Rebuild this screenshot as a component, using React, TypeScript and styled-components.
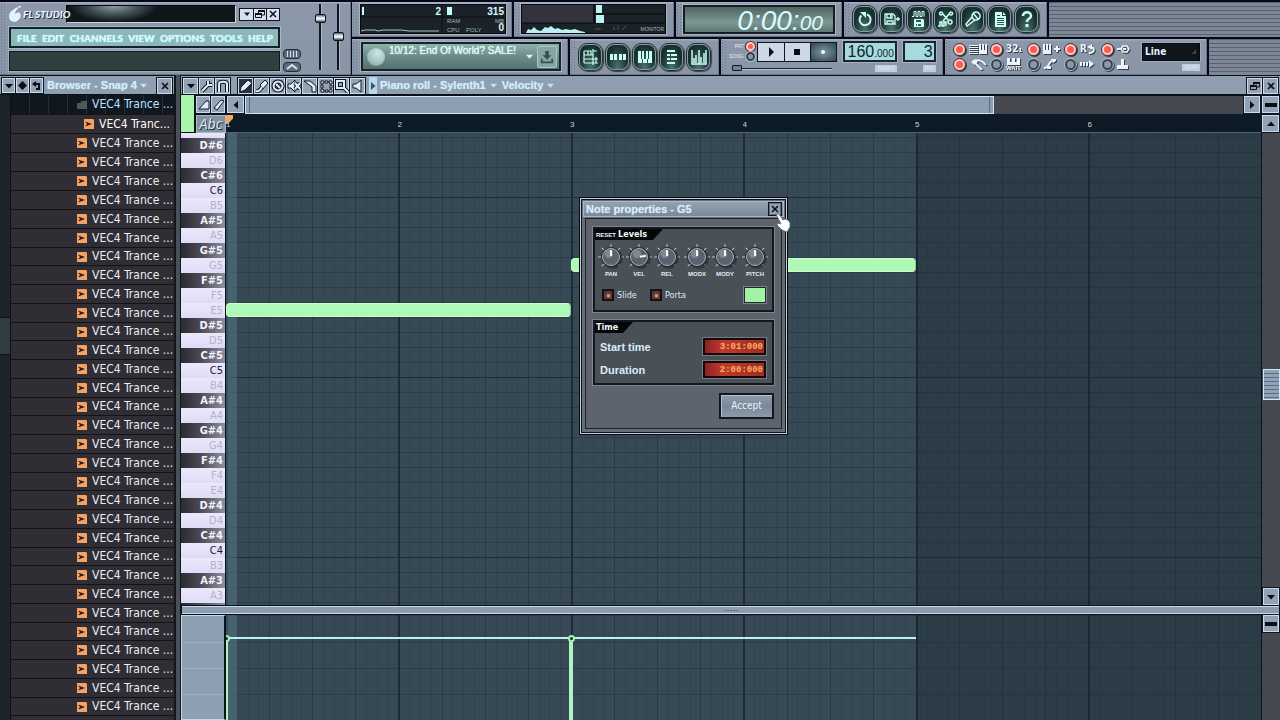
import React from 'react';
import styled, { createGlobalStyle, css } from 'styled-components';

const UI = '"Liberation Sans", Arial, sans-serif';
const TAHOMA = '"DejaVu Sans Condensed", "DejaVu Sans", Tahoma, sans-serif';
const CAPS = 'Lato, "Liberation Sans", sans-serif';
const MONO = '"Liberation Mono", monospace';

const Global = createGlobalStyle`
  *, *::before, *::after { box-sizing: border-box; }
  html, body { margin: 0; background: #10161c; overflow: hidden; }
  body { font-family: ${UI}; font-size: 11px; color: #dff2ff; }
  button, input, select { font: inherit; color: inherit; margin: 0; padding: 0; border: 0; border-radius: 0; background: none; }
  ul, ol { list-style: none; margin: 0; padding: 0; }
  h2 { margin: 0; font-size: 11px; }
  svg { display: block; flex: none; }
`;

/* ---------- shell ---------- */
const Shell = styled.div`
  display: flex;
  flex-direction: column;
  height: 100vh;
  overflow: hidden;
`;
const Header = styled.header`
  display: flex;
  height: 75px;
  flex: none;
  padding-top: 2px;
  background: #04081a;
  gap: 1px;
`;
const Panel = styled.section<{ $w?: number; $pad?: string; $gap?: number }>`
  display: flex;
  align-items: center;
  flex: none;
  width: ${(p) => (p.$w ? `${p.$w}px` : 'auto')};
  padding: ${(p) => p.$pad ?? '0'};
  gap: ${(p) => p.$gap ?? 0}px;
  background:
    radial-gradient(#6c7888 1px, transparent 1px) 0 0 / 3px 3px repeat-y,
    radial-gradient(#6c7888 1px, transparent 1px) 3px 1px / 3px 3px repeat-y,
    linear-gradient(#a1adbb 0 1px, #8c98a9 2px, #8896a8);
  border-right: 1px solid #6a7584;
  border-bottom: 1px solid #6a7584;
`;
const Stripes = styled.div`
  flex: 1;
  background: repeating-linear-gradient(#59626f 0 1px, #7d8795 1px 4px);
`;
const ToolRows = styled.div`
  display: grid;
  grid-template-rows: 35px 36px;
  gap: 2px;
  flex: 1;
  min-width: 0;
`;
const ToolRow = styled.div`
  display: flex;
  gap: 2px;
`;

/* ---------- main title panel ---------- */
const TitlePanel = styled(Panel)`
  width: 351px;
  padding: 2px 0 0 9px;
  align-items: flex-start;
`;
const TitleStack = styled.div`
  width: 271px;
`;
const TitleLine = styled.div`
  display: flex;
  align-items: center;
  height: 20px;
`;
const Brand = styled.h1`
  margin: 0;
  width: 43px;
  white-space: nowrap;
  font: italic 900 10px/18px ${CAPS};
  color: #e6f6fb;
  text-shadow: 1px 1px 0 #1d2730;
  z-index: 1;
`;
const Glass = styled.div`
  flex: 1;
  height: 18px;
  border: 1px solid #05070a;
  border-bottom-color: #c7d3dd;
  border-right-color: #c7d3dd;
  background: radial-gradient(ellipse 44px 16px at 28% 0, #8ba09f, #39484b 60%, transparent), #10171b;
`;
const WinButtons = styled.div`
  display: flex;
  margin-left: 3px;
  border: 1px solid #10151c;
`;
const SquareBtn = styled.button<{ $w?: number; $h?: number; $dark?: boolean }>`
  display: grid;
  place-items: center;
  flex: none;
  width: ${(p) => p.$w ?? 15}px;
  height: ${(p) => p.$h ?? 16}px;
  color: #0a0f16;
  background: ${(p) => (p.$dark ? '#2a333d' : '#93a3b5')};
  border: 1px solid #c9dcec;
  box-shadow: 0 0 0 1px #10161d;
  margin-right: 1px;
`;
const DialogClose = styled(SquareBtn)`
  border-color: #5f6d7c;
`;
const WinBtn = styled.button`
  display: grid;
  place-items: center;
  width: 13px;
  height: 11px;
  color: #10151c;
  background: #d7e0ee;
  & + & { border-left: 1px solid #10151c; }
`;
const MenuBar = styled.nav`
  display: flex;
  align-items: center;
  justify-content: space-between;
  height: 21px;
  margin-top: 3px;
  padding: 0 5px 0 6px;
  background: #8bb8b9;
  border: 2px solid #152028;
  outline: 1px solid #a9b8c6;
`;
const MenuItem = styled.button`
  font: 900 10px/16px ${CAPS};
  color: #d3fbff;
  text-shadow: 0 0 1px #d3fbff;
`;
const Hint = styled.div`
  height: 20px;
  margin-top: 3px;
  background: #2f4041;
  border: 1px solid #101920;
  outline: 1px solid #a1b0be;
`;
const MiniCol = styled.div`
  display: flex;
  flex-direction: column;
  gap: 3px;
  margin: 45px 12px 0 3px;
`;
const MiniBtn = styled.button`
  display: grid;
  place-items: center;
  width: 18px;
  height: 10px;
  border: 1px solid #232c37;
  border-radius: 4px;
  background: #5d6a79;
  color: #d5e4ee;
`;
const Fader = styled.input`
  appearance: none;
  writing-mode: vertical-lr;
  direction: rtl;
  width: 14px;
  height: 66px;
  margin-right: 4px;
  background: linear-gradient(90deg, transparent 6px, #10161e 6px 8px, #aab8c5 8px 9px, transparent 9px);
  &::-webkit-slider-thumb {
    appearance: none;
    width: 11px;
    height: 9px;
    background: linear-gradient(#55606d, #e8f2f6 40% 60%, #39434f);
    border: 1px solid #10161e;
    border-radius: 2px;
  }
`;

/* ---------- displays ---------- */
const Screen = styled.div<{ $w: number }>`
  width: ${(p) => p.$w}px;
  height: 30px;
  overflow: hidden;
  background: #1b2228;
  border: 1px solid #05080c;
  outline: 1px solid #a6b2bf;
`;
const Clock = styled.div`
  display: flex;
  align-items: baseline;
  justify-content: flex-end;
  width: 152px;
  height: 29px;
  padding-right: 10px;
  border: 2px solid #141d22;
  outline: 1px solid #a6b2bf;
  background: linear-gradient(#4e6361, #7d9894 60%, #5d7672);
  color: #d8fbff;
  font: italic 28px/27px ${UI};
`;
const ClockSmall = styled.span`
  font-size: 21px;
`;
const RoundBtn = styled.button`
  display: grid;
  place-items: center;
  width: 25px;
  height: 28px;
  border: 2px solid #86a09f;
  border-radius: 9px;
  outline: 1px solid #232f38;
  outline-offset: -1px;
  background: radial-gradient(ellipse at 50% 100%, #4e7470, #17302f 70%);
  box-shadow: 1px 1px 1px #39434f;
  color: #c9fff6;
  margin-right: 2px;
`;
const News = styled.div`
  display: flex;
  align-items: center;
  gap: 4px;
  width: 200px;
  height: 29px;
  padding: 0 2px 0 4px;
  border: 2px solid #17232a;
  outline: 1px solid #a6b2bf;
  background: linear-gradient(#8fb0ac, #6c8b88 50%, #56716f);
`;
const NewsText = styled.a`
  flex: 1;
  align-self: flex-start;
  white-space: nowrap;
  text-decoration: none;
  color: #e2ffff;
  font: 10px/14px ${UI};
  text-shadow: 0 0 1px #e2ffff;
`;
const Orb = styled.span`
  flex: none;
  width: 18px;
  height: 18px;
  border-radius: 50%;
  background: radial-gradient(circle at 60% 30%, #cde6e4, #a3c2bf 60%, #6b8a88);
`;
const DownloadBtn = styled.button`
  display: grid;
  place-items: center;
  flex: none;
  width: 20px;
  height: 22px;
  border: 1px solid #a9cbc8;
  border-radius: 2px;
  background: #86a5a2;
  color: #34504f;
`;

/* ---------- transport ---------- */
const Led = styled.input`
  appearance: none;
  flex: none;
  width: 11px;
  height: 11px;
  border: 2px solid #3a4450;
  border-radius: 50%;
  background: #8a98a8;
  box-shadow: 0 0 0 1px #b3bfca;
  &:checked {
    background: #ff5a4c;
    border-color: #f6cdc8;
    box-shadow: 0 0 0 1px #56323a;
  }
`;
const SmallLed = styled(Led)`
  width: 9px;
  height: 9px;
`;
const Column = styled.div<{ $gap?: number; $align?: string }>`
  display: flex;
  flex-direction: column;
  gap: ${(p) => p.$gap ?? 0}px;
  align-items: ${(p) => p.$align ?? 'stretch'};
`;
const Row = styled.div<{ $gap?: number }>`
  display: flex;
  align-items: center;
  gap: ${(p) => p.$gap ?? 0}px;
`;
const ModeLabel = styled.label`
  display: flex;
  align-items: center;
  justify-content: flex-end;
  gap: 2px;
  height: 9px;
  font: 5px/7px ${UI};
  color: #e3eef7;
`;
const PlayGroup = styled.div`
  display: flex;
  border: 1px solid #10161e;
`;
const PlayBtn = styled.button<{ $rec?: boolean }>`
  display: grid;
  place-items: center;
  width: 26px;
  height: 18px;
  background: ${(p) => (p.$rec ? 'radial-gradient(#7e979f, #2e444c)' : '#cdd7e6')};
  color: ${(p) => (p.$rec ? '#dffcff' : '#0b1016')};
  & + & { border-left: 1px solid #10161e; }
`;
const SongPos = styled.input`
  appearance: none;
  width: 100px;
  height: 7px;
  margin: 3px 0 0 3px;
  background: linear-gradient(transparent 3px, #1d252e 3px 4px, #b6c2ce 4px 5px, transparent 5px);
  &::-webkit-slider-thumb {
    appearance: none;
    width: 10px;
    height: 6px;
    border: 1px solid #10161e;
    border-radius: 1px;
    background: #76828f;
  }
`;
const Lcd = styled.div<{ $w: number }>`
  display: flex;
  justify-content: flex-end;
  align-items: baseline;
  width: ${(p) => p.$w}px;
  height: 21px;
  padding-right: 1px;
  border: 2px solid #1a242c;
  outline: 1px solid #a6b2bf;
  background: #a5dbdf;
  color: #10242a;
  font: 16px/18px ${UI};
`;
const LcdSmall = styled.span`
  font-size: 10px;
`;
const Plate = styled.span`
  height: 7px;
  padding: 0 2px;
  margin-top: 3px;
  background: #bfcbe2;
  color: #dfe8f5;
  font: 5px/7px ${UI};
`;
const Toggles = styled.div`
  display: grid;
  grid-template-columns: repeat(5, 37px);
  grid-auto-rows: 15px;
  align-items: center;
`;
const Toggle = styled.label`
  display: flex;
  align-items: center;
  gap: 4px;
  color: #edf3f8;
  filter: drop-shadow(1px 1px 0 #333d49);
`;
const SnapSelect = styled.select`
  appearance: none;
  width: 58px;
  height: 18px;
  padding-left: 2px;
  border: 1px solid #06090d;
  outline: 1px solid #9eabb9;
  background: linear-gradient(135deg, transparent 50%, #3d4650 50%) 49px 6px / 4px 4px no-repeat, #10151b;
  font: bold 10px/16px ${TAHOMA};
`;

/* ---------- browser ---------- */
const Body = styled.main`
  display: flex;
  flex: 1;
  min-height: 0;
  background: #10161c;
`;
const BrowserPane = styled.aside`
  display: flex;
  flex-direction: column;
  flex: none;
  width: 175px;
  border-right: 1px solid #10141a;
`;
const Bar = styled.div`
  display: flex;
  align-items: center;
  flex: none;
  height: 20px;
  padding: 1px 1px 0 2px;
  background: #8d9fb1;
  border-bottom: 1px solid #0b1118;
  border-top: 1px solid #0b1118;
`;
const BarTitle = styled.h2<{ $m: string }>`
  margin: ${(p) => p.$m};
  white-space: pre;
  font: bold 11px/14px ${UI};
  color: #d7ebfb;
  text-shadow: 0 0 1px #b9d8f0;
`;
const Caret = styled.span`
  color: #c9dff0;
`;
const Spacer = styled.div<{ $n?: number }>`
  flex: ${(p) => p.$n ?? 1};
`;
const BrowserBody = styled.div`
  display: flex;
  flex: 1;
  min-height: 0;
`;
const BrowserScroll = styled.div`
  width: 11px;
  background: #1c242a;
  border-right: 1px solid #0c1014;
  &::after {
    content: '';
    display: block;
    height: 38px;
    margin-top: 222px;
    background: #303d42;
    border-block: 1px solid #0c1014;
  }
`;
const FileList = styled.ul`
  flex: 1;
  overflow: hidden;
  background: #302d34;
`;
const FileRow = styled.li<{ $kind?: 'folder' | 'sub' }>`
  display: flex;
  align-items: center;
  gap: 5px;
  height: 19px;
  padding-left: 66px;
  white-space: nowrap;
  border-bottom: 1px solid #131217;
  font: 12px/17px ${TAHOMA};
  color: #e9edf6;
  &:nth-child(4n + 1) { height: 18px; }
  &:nth-child(5) { height: 19px; }
  ${(p) =>
    p.$kind === 'folder' &&
    css`
      background: repeating-linear-gradient(90deg, transparent 0 18px, #262e36 18px 19px) , #10181f;
      color: #bfe0ff;
      &:nth-child(4n + 1) { height: 20px; }
      svg { color: #4d5a5c; }
    `}
  ${(p) =>
    p.$kind === 'sub' &&
    css`
      padding-left: 73px;
      color: #ffffff;
    `}
`;
const Divider = styled.div`
  flex: none;
  width: 6px;
  background: #4a5058;
  border-inline: 1px solid #12171d;
`;

/* ---------- piano roll ---------- */
const Roll = styled.section`
  display: flex;
  flex-direction: column;
  flex: 1;
  min-width: 0;
`;
const ToolGroup = styled.div`
  display: flex;
  margin-left: 7px;
`;
const PlayChip = styled.span`
  display: grid;
  place-items: center;
  width: 8px;
  height: 17px;
  margin-left: 3px;
  background: #b9d8ef;
  color: #3d5266;
`;
const TopArea = styled.div`
  display: grid;
  grid-template-columns: 14px 31px 1fr 19px;
  grid-template-rows: 19px 19px;
  flex: none;
  background: #0b1118;
`;
const ColorStrip = styled.div`
  grid-row: 1 / 3;
  background: #a9f5ae;
  border-right: 1px solid #0b1118;
  border-bottom: 1px solid #0b1118;
`;
const Cell = styled.div`
  display: flex;
  align-items: center;
  padding-left: 1px;
  min-width: 0;
`;
const AbcBtn = styled.button`
  width: 30px;
  height: 18px;
  background: #82909f;
  color: #d9ebf8;
  font: italic 14px/16px ${TAHOMA};
  text-shadow: 1px 1px 0 #1d2731;
  border: 1px solid #a9bac9;
`;
const HTrack = styled.div`
  flex: 1;
  height: 18px;
  background: #464950;
`;
const HThumb = styled.div`
  width: 75%;
  height: 18px;
  border: 1px solid #cfe2f2;
  background: linear-gradient(90deg, transparent 3px, #5d6d7f 3px 4px, transparent 4px calc(100% - 4px), #5d6d7f calc(100% - 4px) calc(100% - 3px), transparent calc(100% - 3px)), #8d9fb3;
`;
const Ruler = styled.ol`
  display: grid;
  grid-template-columns: repeat(6, 1fr);
  background: #0c1b25;
  border-bottom: 1px solid #4e6371;
  font: 8px/21px ${UI};
  color: #c6d9e4;
`;
const Tick = styled.li<{ $first?: boolean }>`
  margin-left: -1px;
  overflow: hidden;
  ${(p) => p.$first && css`
    display: flex;
    margin-left: 0;
    &::before { content: ''; width: 7px; height: 9px; margin: 1px -7px 0 0; background: #f5a864; clip-path: polygon(0 0, 100% 0, 100% 40%, 25% 100%, 0 100%); }
  `}
`;
const KeyArea = styled.div`
  display: grid;
  grid-template-columns: 45px 1fr 19px;
  flex: 1;
  min-height: 0;
`;
const Keys = styled.ol`
  overflow: hidden;
  border-right: 1px solid #0c1218;
`;
const Key = styled.li<{ $black: boolean; $root: boolean; $cut: boolean }>`
  height: ${(p) => (p.$cut ? 5 : 15)}px;
  overflow: hidden;
  padding-right: 2px;
  text-align: right;
  font: ${(p) => (p.$black ? 'bold 11px/15px' : '11px/15px')} ${TAHOMA};
  color: ${(p) => (p.$black ? '#f4f4ff' : p.$root ? '#20242c' : '#b4b3c4')};
  background: ${(p) =>
    p.$black ? 'linear-gradient(90deg, #2b2a32, #4c4b55 45%, #8f8fa0)' : 'linear-gradient(#ebe8fd, #dedcf6)'};
`;
const verticals = css`
  repeating-linear-gradient(90deg, #1b2b38 0 2px, transparent 2px calc(100% / 6)),
  repeating-linear-gradient(90deg, #293a47 0 1px, transparent 1px calc(100% / 24)),
  repeating-linear-gradient(90deg, #31434f 0 1px, transparent 1px calc(100% / 96))
`;
const shade = css`
  linear-gradient(90deg, rgba(96, 135, 150, 0.4) 11px, transparent 11px calc(100% * 2 / 3), rgba(22, 36, 44, 0.34) calc(100% * 2 / 3))
`;
const Grid = styled.div`
  position: relative;
  overflow: hidden;
  background:
    ${shade},
    repeating-linear-gradient(transparent 0 64px, #1d2e3a 64px 65px, transparent 65px 180px),
    ${verticals},
    repeating-linear-gradient(transparent 0 4px, #2c3d4a 4px 5px, transparent 5px 15px),
    #374955;
`;
const Note = styled.div<{ $bar: number; $row: number }>`
  position: absolute;
  left: calc(100% * ${(p) => p.$bar} / 6);
  top: ${(p) => p.$row * 15 - 10}px;
  width: calc(100% / 3);
  height: 14px;
  border-radius: 4px;
  background: #aef9b5;
  border: 1px solid #c9ffcb;
  border-right-color: #86cf93;
`;
const VTrack = styled.div`
  display: flex;
  flex-direction: column;
  align-items: flex-end;
  background: #464950;
  border-left: 1px solid #0c1218;
`;
const VThumb = styled.div`
  width: 17px;
  height: 31px;
  border: 1px solid #d3e4f2;
  background: repeating-linear-gradient(#8fa2b8 0 3px, #5b6c80 3px 4px);
`;
const Splitter = styled.div`
  display: grid;
  place-items: center;
  flex: none;
  height: 10px;
  background: #8c9cae;
  border: 1px solid #0b1118;
  box-shadow: inset 0 1px #c8dbe9, inset 0 -1px #c8dbe9;
  color: #5c6b7b;
`;
const LaneArea = styled.div`
  display: grid;
  grid-template-columns: 45px 1fr 19px;
  flex: none;
  height: 105px;
`;
const LaneHead = styled.div`
  background: repeating-linear-gradient(transparent 0 25px, #9eb1c3 25px 26px) 0 1px, #8c9fb3;
  border: 1px solid #c4d8e8;
  border-right: 2px solid #0c1218;
`;
const Lane = styled.div`
  position: relative;
  overflow: hidden;
  background:
    ${shade},
    ${verticals},
    repeating-linear-gradient(transparent 0 25px, #2c3d4a 25px 26px) 0 2px,
    #374955;
`;
const Velocity = styled.div<{ $bar: number }>`
  position: absolute;
  left: calc(100% * ${(p) => p.$bar} / 6);
  top: 22px;
  bottom: 0;
  width: calc(100% / 3);
  border-top: 2px solid #bfeef5;
  &::before {
    content: '';
    position: absolute;
    left: -2px;
    top: 0;
    bottom: 0;
    width: 4px;
    background: #aef3c4;
  }
  &::after {
    content: '';
    position: absolute;
    left: -3px;
    top: -4px;
    width: 7px;
    height: 7px;
    border: 2px solid #9df5a8;
    border-radius: 50%;
    background: #12351d;
  }
`;

/* ---------- note properties ---------- */
const Dialog = styled.section`
  position: absolute;
  left: 579px;
  top: 197px;
  width: 209px;
  padding: 1px;
  border: 1px solid #070a0f;
  background: #c3cfdd;
`;
const DialogInner = styled.div`
  padding: 1px;
  border: 1px solid #10151b;
  background: #646c76;
`;
const DialogTitle = styled.div`
  display: flex;
  align-items: center;
  height: 16px;
  padding: 0 1px 0 2px;
  border: 1px solid #a9b6c4;
  background: linear-gradient(#93a1b1, #7b8897);
`;
const DialogBody = styled.div`
  margin: 1px 2px 2px;
  padding: 8px 7px 9px 7px;
  border: 1px solid #1d2329;
  background: #5d646d;
`;
const Group = styled.fieldset<{ $h: number }>`
  min-width: 0;
  height: ${(p) => p.$h}px;
  margin: 0 0 8px;
  padding: 1px 6px 1px 5px;
  border: 2px solid #14181d;
  outline: 1px solid #7c858f;
  background: #495056;
`;
const Tab = styled.div<{ $w: number }>`
  display: flex;
  align-items: center;
  gap: 2px;
  width: ${(p) => p.$w}px;
  height: 11px;
  margin: -1px -5px 2px;
  padding-left: 1px;
  background: #050608;
  clip-path: polygon(0 0, 100% 0, calc(100% - 10px) 100%, 0 100%);
  color: #f2f8ff;
  font: bold 9px/11px ${TAHOMA};
`;
const ResetBtn = styled.button`
  font: bold 6px/10px ${UI};
`;
const Knobs = styled.div`
  display: flex;
  gap: 2px;
  margin: 3px -4px 0 -3px;
`;
const KnobLabel = styled.label`
  position: relative;
  display: flex;
  flex-direction: column;
  align-items: center;
  width: 28px;
  font: bold 6px/6px ${UI};
  color: #e1ecf6;
  input { position: absolute; inset: 0; width: 28px; opacity: 0; }
`;
const Switches = styled.div`
  display: flex;
  align-items: center;
  margin-top: 10px;
`;
const CheckLabel = styled.label`
  display: flex;
  align-items: center;
  gap: 3px;
  width: 48px;
  padding-left: 2px;
  font: 9px/12px ${TAHOMA};
  color: #dceaf6;
`;
const Check = styled.input`
  appearance: none;
  width: 12px;
  height: 12px;
  border: 2px solid #17100f;
  background: radial-gradient(circle at 55% 60%, #c8a49c 1px, #74413c 2px, #4a2827);
`;
const Swatch = styled.button`
  width: 22px;
  height: 16px;
  margin-left: auto;
  border: 1px solid #1e2a22;
  outline: 1px solid #79838d;
  background: #a2f1a6;
`;
const TimeRow = styled.label`
  display: flex;
  align-items: center;
  justify-content: space-between;
  height: 23px;
  font: bold 11px/14px ${UI};
  color: #dcecfa;
`;
const TimeInput = styled.input`
  width: 63px;
  height: 17px;
  padding-right: 1px;
  text-align: right;
  border: 2px solid #170808;
  outline: 1px solid #737b85;
  background: linear-gradient(90deg, #8a2422, #c0392f 30%, #9c2f20);
  color: #ffb061;
  font: bold 9px/12px ${MONO};
`;
const Accept = styled.button`
  display: block;
  width: 55px;
  height: 26px;
  margin: 0 0 0 auto;
  border: 2px solid #14181d;
  background: linear-gradient(#8f9dad, #7c8897 50%, #8c9aaa);
  box-shadow: inset 1px 1px #b4c2d0;
  color: #e4f4ff;
  font: 10px/20px ${TAHOMA};
`;
const Pointer = styled.div`
  position: absolute;
  left: 774px;
  top: 213px;
`;

/* ---------- icon drawings ---------- */
type IconProps = { d?: string; f?: string; w?: number; h?: number; vb?: string; sw?: number };
const Icon = ({ d, f, w = 16, h = 16, vb = '0 0 16 16', sw = 2 }: IconProps) => (
  <svg width={w} height={h} viewBox={vb} aria-hidden="true">
    {f && <path d={f} fill="currentColor" fillRule="evenodd" />}
    {d && <path d={d} fill="none" stroke="currentColor" strokeWidth={sw} />}
  </svg>
);
const CloseIcon = () => <Icon w={10} h={10} vb="0 0 10 10" d="M2 2l6 6M8 2l-6 6" sw={1.600} />;
const RestoreIcon = () => <Icon w={10} h={10} vb="0 0 10 10" d="M3.500 4V1.500h6V6H7M.5 4.500h6v4h-6z" f="M3 1h7v2H3zM0 4h7v2H0z" sw={1} />;
const Down = ({ s = 8 }: { s?: number }) => <Icon w={s} h={s} vb="0 0 8 8" f="M0 2h8L4 6.500z" />;
const Left = () => <Icon w={8} h={8} vb="0 0 8 8" f="M6 0v8L1.500 4z" />;
const Right = () => <Icon w={8} h={8} vb="0 0 8 8" f="M2 0v8L6.500 4z" />;
const Up = () => <Icon w={8} h={8} vb="0 0 8 8" f="M0 6h8L4 1.500z" />;
const Dash = () => <Icon w={14} h={8} vb="0 0 14 8" f="M1 2h12v4H1z" />;

/* small outlined glyph used on the piano roll toolbar */
const ToolIcon = ({ d, f }: { d?: string; f?: string }) => (
  <svg width="14" height="14" viewBox="0 0 14 14" aria-hidden="true">
    {f && <path d={f} fill="#dcecf8" stroke="#101820" strokeWidth="1" />}
    {d && <path d={d} fill="none" stroke="#101820" strokeWidth="4" />}
    {d && <path d={d} fill="none" stroke="#dcecf8" strokeWidth="2" />}
  </svg>
);

const fileIcons: [string, IconProps][] = [
  ['Undo', { d: 'M4.500 4.500A5.500 5.500 0 1 0 10 3.500', f: 'M3 1h6v6z' }],
  ['Save new version', { d: 'M1 3h8l2 2v8H1zM3 3v4h5V3M3 13v-3h6v3M12 8h4M14 6v4', f: 'M6 3h1v3H6z', sw: 1.300 }],
  ['Render', { d: 'M1 5.500h2v-5h2v5h2v-5h2v5h2v-5h2v5', f: 'M3 8h9l1 1v7H3zM5 9v2h5V9zM5 13v2h1v-2zM7 13v2h3v-2z', sw: 1 }],
  ['Edit audio', { d: 'M4 2l7 8M12 2L5 10M0 15h2v-4h2v4h2v-4h2v4M3 1a1.500 1.500 0 1 0 .1 0M13 1a1.500 1.500 0 1 0 .1 0M12 9a2 2 0 1 0 .1 0', sw: 1.500 }],
  ['Record', { d: 'M7 6L1 13l1 2 8-6M11 1a4 4 0 1 0 .1 0M8 2l5 6', sw: 1.500 }],
  ['Project info', { f: 'M3 1h7v4h4v11H3zM11 1l3 3h-3zM5 4h3v1H5zM5 7h7v1H5zM5 9h7v1H5zM5 11h7v1H5zM5 13h7v1H5z' }],
];
const windowIcons: [string, IconProps][] = [
  ['Playlist', { d: 'M1 2h7v4M1 2v12M1 6h9M1 10h14M1 14h14M10 0v16M13 8v6M5 2v4M10 2h4', sw: 1.200 }],
  ['Step sequencer', { f: 'M0 5h3v6H0zM4 5h3v6H4zM9 5h3v6H9zM13 5h3v6h-3z' }],
  ['Piano roll', { f: 'M1 2h3v8h1v4H1zM5 2h2v8h2V2h2v8h-1v4H6v-4H5zM12 2h3v12h-4v-4h1z' }],
  ['Browser', { f: 'M3 1h8v2H3zM3 5h3v2H3zM7 5h6v2H7zM3 9h3v2H3zM7 9h6v2H7zM3 13h8v2H3z' }],
  ['Mixer', { d: 'M1 1v14h14V1M8 1v14M3 14V9M5 14V6M10 14V8M13 14V4', sw: 1.500 }],
];
const toggleIcons: IconProps[] = [
  { f: 'M0 1h9v1H0zM0 3h9v1H0zM0 5h9v1H0zM0 7h9v1H0zM0 9h9v1H0zM10 0h2v6h1V0h2v6h1V0h2v10h-8z' },
  {},
  { f: 'M0 0h2v6h1V0h2v6h1V0h2v10H0zM13 2h2v2h2v2h-2v2h-2V6h-2V4h2z' },
  {},
  { d: 'M4 5l2-3h4l2 3-2 3H6z', f: 'M0 4h4v2H0zM6 4h3v2H6z', sw: 1.500 },
  { d: 'M6 4l7 7M4 3c4-3 9-2 13 3', f: 'M2 3l4-3 3 3-4 3z' },
  {},
  { d: 'M1 9c6 0 4-6 8-7', f: 'M8 0h5v2l-3 2zM4 7h4v3H4z' },
  { f: 'M0 3h2v4H0zM3 3h2v4H3zM6 3h2v4H6zM9 1l5 4-5 4z' },
  { f: 'M4 0h3v6h4v4H0V6h4z' },
];
const checked = [true, true, true, true, true, true, false, false, false, false];
const toggleNames = ['Typing keyboard', 'Countdown', 'Overdub', 'Loop record', 'Link', 'Auto scroll', 'Wait for input', 'Step edit', 'Multilink', 'Joystick'];

const ToggleText = styled.b`
  display: flex;
  font: bold 10px/10px ${TAHOMA};
`;
const WaitMark = styled.span`
  display: flex;
  flex-direction: column;
  align-items: center;
  font: bold 6px/6px ${UI};
`;

const rollTools: [string, { d?: string; f?: string }][] = [
  ['Draw', { f: 'M1 13l1-5 7-7 4 3-7 7z' }],
  ['Paint', { d: 'M1 12c3 1 5-2 6-4', f: 'M5 6l5-5 3 3-5 6z' }],
  ['Delete', { d: 'M7 2.500a4.500 4.500 0 1 0 .1 0M5 5l4 4' }],
  ['Mute', { d: 'M8 4l5 6M13 4l-5 6', f: 'M1 5h3l4-4v12L4 9H1z' }],
  ['Slice', { f: 'M1 2h6l6 5v6H9V8z' }],
  ['Select', { f: 'M2 2h3v2H4v1H2zM6 2h3v2H6zM10 2h3v3h-2V4h-1zM2 6h2v3H2zM11 6h2v3h-2zM2 10h2v1h1v2H2zM6 11h3v2H6zM11 10h2v3h-3v-2h1z' }],
  ['Zoom', { d: 'M2 2h7v7H2zM9 9l4 4' }],
  ['Playback', { f: 'M2 5h3l5-4v12L5 9H2z' }],
];

const NAMES = ['C', 'C#', 'D', 'D#', 'E', 'F', 'F#', 'G', 'G#', 'A', 'A#', 'B'];
/* note numbers going down from E6 */
const keys = Array.from({ length: 33 }, (_, i) => 76 - i).map((n) => `${NAMES[n % 12]}${Math.floor(n / 12)}`);

const Knob = ({ name, angle }: { name: string; angle: number }) => (
  <KnobLabel>
    <input type="range" />
    <svg width="28" height="28" viewBox="0 0 28 28" aria-hidden="true">
      <g stroke="#b7c4cf" strokeWidth="1">
        {[-135, -90, -45, 0, 45, 90, 135].map((a) => (
          <path key={a} d="M14 1v4" transform={`rotate(${a} 14 14)`} />
        ))}
      </g>
      <circle cx="16" cy="16" r="10" fill="#24292e" opacity="0.6" />
      <circle cx="14" cy="14" r="10" fill="#20262c" />
      <circle cx="14" cy="14" r="8.500" fill="#5b646e" stroke="#a7b2bc" strokeWidth="1" />
      <circle cx="12" cy="11" r="4" fill="#87929d" opacity="0.8" />
      <path d="M14 7v6" stroke="#f3fbff" strokeWidth="2" transform={`rotate(${angle} 14 14)`} />
    </svg>
    {name}
  </KnobLabel>
);

const FileIcon = () => (
  <svg width="10" height="10" viewBox="0 0 10 10" aria-hidden="true">
    <path d="M0 0h9l1 1v9H0z" fill="#f5a365" />
    <path d="M1 2.500l7 2.500-7 2.500 2-2.500z" fill="#2b1b16" />
  </svg>
);
const FolderIcon = () => <Icon w={10} h={9} vb="0 0 10 9" f="M0 3h4V1h6v8H0z" />;

const Performance = () => (
  <svg width="144" height="28" viewBox="0 0 144 28">
    <path d="M81 0v28M0 12h144" stroke="#0c1014" />
    <path d="M1 2h2v8H1zM86 2h5v8h-5z" fill="#c8fbff" />
    <path d="M0 26l4-1h10l3 1 5-1h18l8 1h30" stroke="#9fc7cb" fill="none" />
    <g fill="#d9f8ff" fontFamily={UI} fontWeight="bold" fontSize="10" textAnchor="end">
      <text x="80" y="10">2</text>
      <text x="143" y="10">315</text>
      <text x="143" y="26">0</text>
    </g>
    <g fill="#9db6bd" fontFamily={UI} fontSize="6">
      <text x="86" y="18">RAM</text>
      <text x="134" y="18">MB</text>
      <text x="86" y="27">CPU</text>
      <text x="105" y="27">POLY</text>
    </g>
  </svg>
);
const Scope = () => (
  <svg width="143" height="28" viewBox="0 0 143 28">
    <rect width="71" height="18" fill="#32333c" />
    <path d="M72 0v18M71 9h72M0 18h143" stroke="#07090c" />
    <path d="M74 0h6v8h-6zM74 10h8v8h-8z" fill="#bdf3f5" />
    <path d="M4 28l2-4 3 1 3-3 3 3 4 1 4-4 3 1 3-2 4 3 3-1 4 2 4-1 4 1 5-1 5 2 5 1v1z" fill="#bdf0f3" />
    <text x="142" y="26" textAnchor="end" fill="#a7bcc3" fontFamily={UI} fontSize="5">MONITOR</text>
    <path d="M73 24h6M92 25v-3M96 25v-5M100 25l4-4" stroke="#4d5a60" />
  </svg>
);

export default function App() {
  return (
    <Shell>
      <Global />
      <Header>
        <TitlePanel>
          <TitleStack>
            <TitleLine>
              <Icon w={14} h={16} vb="0 0 14 16" f="M4 4c-5 3-5 8-2 11l4 1c4-1 7-5 5-9-2-1-4 0-5 1 0-3 2-5 5-7-3 0-5 1-7 3z M9 0l4-1-2 3z" />
              <Brand>FL STUDIO</Brand>
              <Glass />
              <WinButtons>
                <WinBtn aria-label="Minimize"><Down s={6} /></WinBtn>
                <WinBtn aria-label="Restore"><RestoreIcon /></WinBtn>
                <WinBtn aria-label="Close"><CloseIcon /></WinBtn>
              </WinButtons>
            </TitleLine>
            <MenuBar>
              {['FILE', 'EDIT', 'CHANNELS', 'VIEW', 'OPTIONS', 'TOOLS', 'HELP'].map((m) => (
                <MenuItem key={m}>{m}</MenuItem>
              ))}
            </MenuBar>
            <Hint />
          </TitleStack>
          <MiniCol>
            <MiniBtn aria-label="Keyboard"><Icon w={12} h={6} vb="0 0 12 6" f="M1 0h1v6H1zM4 0h1v6H4zM7 0h1v6H7zM10 0h1v6h-1z" /></MiniBtn>
            <MiniBtn aria-label="Pitch"><Icon w={12} h={6} vb="0 0 12 6" d="M1 5l5-4 5 4" /></MiniBtn>
          </MiniCol>
          <Fader type="range" aria-label="Main volume" defaultValue={82} />
          <Fader type="range" aria-label="Main pitch" defaultValue={51} />
        </TitlePanel>
        <ToolRows>
          <ToolRow>
            <Panel $w={160} $pad="0 0 0 8px"><Screen $w={146}><Performance /></Screen></Panel>
            <Panel $w={160} $pad="0 0 0 7px"><Screen $w={145}><Scope /></Screen></Panel>
            <Panel $w={166} $pad="0 0 0 7px"><Clock>0:00:<ClockSmall>00</ClockSmall></Clock></Panel>
            <Panel $w={203} $pad="0 0 0 8px">
              {fileIcons.map(([n, p]) => <RoundBtn key={n} aria-label={n}><Icon {...p} /></RoundBtn>)}
              <RoundBtn aria-label="Help">
                <Icon d="M4 5c0-5 8-5 8 0 0 3-4 2-4 6" f="M6.500 13h3v3h-3z" sw={2.500} />
              </RoundBtn>
            </Panel>
            <Stripes />
          </ToolRow>
          <ToolRow>
            <Panel $w={216} $pad="0 0 0 9px">
              <News>
                <Orb />
                <NewsText href="#news">10/12: End Of World? SALE!</NewsText>
                <Down s={7} />
                <DownloadBtn aria-label="Download"><Icon w={14} h={14} f="M6 1h4v5h3l-5 5-5-5h3zM1 10h2v3h10v-3h2v5H1z" /></DownloadBtn>
              </News>
            </Panel>
            <Panel $w={149} $pad="0 0 0 8px">
              {windowIcons.map(([n, p]) => <RoundBtn key={n} aria-label={n}><Icon {...p} /></RoundBtn>)}
            </Panel>
            <Panel $w={222} $pad="0 0 0 8px" $gap={6}>
              <Column>
                <Row $gap={2}>
                  <Column $gap={1}>
                    <ModeLabel>PAT<SmallLed type="radio" name="mode" defaultChecked /></ModeLabel>
                    <ModeLabel>SONG<SmallLed type="radio" name="mode" /></ModeLabel>
                  </Column>
                  <PlayGroup>
                    <PlayBtn aria-label="Play"><Icon w={12} h={12} vb="0 0 12 12" f="M4 1l5 5-5 5z" /></PlayBtn>
                    <PlayBtn aria-label="Stop"><Icon w={12} h={12} vb="0 0 12 12" f="M3 3h6v6H3z" /></PlayBtn>
                    <PlayBtn $rec aria-label="Record"><Icon w={12} h={12} vb="0 0 12 12" f="M6 4a2 2 0 1 0 .1 0" /></PlayBtn>
                  </PlayGroup>
                </Row>
                <SongPos type="range" aria-label="Song position" defaultValue={0} />
              </Column>
              <Column $align="flex-end">
                <Lcd $w={54}>160<LcdSmall>.000</LcdSmall></Lcd>
                <Plate>TEMPO</Plate>
              </Column>
              <Column $align="flex-end">
                <Lcd $w={33}>3</Lcd>
                <Plate>PAT</Plate>
              </Column>
            </Panel>
            <Panel $w={262} $pad="0 0 0 9px" $gap={3}>
              <Toggles>
                {toggleIcons.map((ic, i) => (
                  <Toggle key={toggleNames[i]}>
                    <Led type="checkbox" defaultChecked={checked[i]} aria-label={toggleNames[i]} />
                    {i === 1 ? <ToggleText>32₁</ToggleText> : i === 3 ? (
                      <ToggleText>R<Icon w={9} h={10} vb="0 0 9 10" d="M2 9c6 0 6-5 2-6" f="M0 3l5-3v6z" /></ToggleText>
                    ) : i === 6 ? (
                      <WaitMark><Icon w={14} h={7} vb="0 0 14 7" f="M0 0h3v4h2V0h3v4h2V0h3v7H0z" />WAIT</WaitMark>
                    ) : <Icon w={18} h={11} vb="0 0 18 11" {...ic} />}
                  </Toggle>
                ))}
              </Toggles>
              <Column $align="flex-end">
                <SnapSelect aria-label="Snap"><option>Line</option></SnapSelect>
                <Plate>SNAP</Plate>
              </Column>
            </Panel>
            <Stripes />
          </ToolRow>
        </ToolRows>
      </Header>

      <Body>
        <BrowserPane>
          <Bar>
            <SquareBtn $w={13} $h={15} aria-label="Browser menu"><Down /></SquareBtn>
            <SquareBtn $w={13} $h={15} aria-label="Refresh"><Icon w={9} h={9} vb="0 0 9 9" f="M4.500 0L9 4.500 4.500 9 0 4.500z" /></SquareBtn>
            <SquareBtn $w={13} $h={15} aria-label="Back"><Icon w={9} h={9} vb="0 0 9 9" d="M3 3h4v5H4" f="M0 3l4-3v6z" /></SquareBtn>
            <BarTitle $m="0 3px 2px 3px">Browser - Snap 4</BarTitle>
            <Caret><Down s={7} /></Caret>
            <Spacer />
            <SquareBtn aria-label="Close browser"><CloseIcon /></SquareBtn>
          </Bar>
          <BrowserBody>
            <BrowserScroll />
            <FileList>
              <FileRow $kind="folder"><FolderIcon />VEC4 Trance ...</FileRow>
              <FileRow $kind="sub"><FileIcon />VEC4 Tranc...</FileRow>
              {Array.from({ length: 31 }, (_, i) => (
                <FileRow key={i}><FileIcon />VEC4 Trance ...</FileRow>
              ))}
            </FileList>
          </BrowserBody>
        </BrowserPane>
        <Divider />

        <Roll>
          <Bar>
            <SquareBtn aria-label="Piano roll menu"><Down /></SquareBtn>
            <SquareBtn aria-label="Tools"><ToolIcon d="M2 12l6-6M8 2v4h4" /></SquareBtn>
            <SquareBtn aria-label="Magnet"><ToolIcon d="M3 13V5c0-3 8-3 8 0v8" /></SquareBtn>
            <ToolGroup>
              {rollTools.map(([n, p], i) => (
                <SquareBtn key={n} $dark={i === 0} aria-label={n}><ToolIcon {...p} /></SquareBtn>
              ))}
            </ToolGroup>
            <PlayChip><Right /></PlayChip>
            <BarTitle $m="0 4px 2px 3px">Piano roll - Sylenth1</BarTitle>
            <Caret><Down s={7} /></Caret>
            <BarTitle $m="0 4px 2px 5px">Velocity</BarTitle>
            <Caret><Down s={7} /></Caret>
            <Spacer />
            <SquareBtn aria-label="Detach"><RestoreIcon /></SquareBtn>
            <SquareBtn aria-label="Close piano roll"><CloseIcon /></SquareBtn>
          </Bar>
          <TopArea>
            <ColorStrip />
            <Cell>
              <SquareBtn $w={14} $h={17} aria-label="Ramp"><ToolIcon f="M2 11L9 3h3v8z" /></SquareBtn>
              <SquareBtn $w={14} $h={17} aria-label="Slide"><ToolIcon f="M2 10l7-8 3 1-7 9z" /></SquareBtn>
            </Cell>
            <Cell>
              <SquareBtn $w={17} $h={17} aria-label="Scroll left"><Left /></SquareBtn>
              <HTrack><HThumb /></HTrack>
              <SquareBtn $w={16} $h={17} aria-label="Scroll right"><Right /></SquareBtn>
            </Cell>
            <Cell><SquareBtn $w={17} $h={17} aria-label="Zoom"><Dash /></SquareBtn></Cell>
            <Cell><AbcBtn>Abc</AbcBtn></Cell>
            <Ruler>
              {[1, 2, 3, 4, 5, 6].map((n) => <Tick key={n} $first={n === 1}>{n}</Tick>)}
            </Ruler>
            <Cell><SquareBtn $w={17} $h={17} aria-label="Scroll up"><Up /></SquareBtn></Cell>
          </TopArea>
          <KeyArea>
            <Keys>
              {keys.map((k, i) => (
                <Key key={k} $black={k.includes('#')} $root={/^C\d/.test(k)} $cut={i === 0}>
                  {i === 0 || i === keys.length - 1 ? '' : k}
                </Key>
              ))}
            </Keys>
            <Grid>
              <Note $bar={0} $row={12} />
              <Note $bar={2} $row={9} />
            </Grid>
            <VTrack>
              <Spacer $n={5} />
              <VThumb />
              <Spacer $n={4} />
              <SquareBtn $w={16} $h={17} aria-label="Scroll down"><Down /></SquareBtn>
            </VTrack>
          </KeyArea>
          <Splitter><Icon w={14} h={3} vb="0 0 14 3" f="M0 1h2v1H0zM3 1h2v1H3zM6 1h2v1H6zM9 1h2v1H9zM12 1h2v1h-2z" /></Splitter>
          <LaneArea>
            <LaneHead />
            <Lane>
              <Velocity $bar={0} />
              <Velocity $bar={2} />
            </Lane>
            <VTrack><SquareBtn $w={16} $h={17} aria-label="Lane zoom"><Dash /></SquareBtn></VTrack>
          </LaneArea>
        </Roll>
      </Body>

      <Dialog role="dialog" aria-label="Note properties">
        <DialogInner>
          <DialogTitle>
            <BarTitle $m="0">Note properties - G5</BarTitle>
            <Spacer />
            <DialogClose $w={12} $h={12} aria-label="Close"><CloseIcon /></DialogClose>
          </DialogTitle>
          <DialogBody>
            <Group $h={85}>
              <Tab $w={68}><ResetBtn>RESET</ResetBtn>Levels</Tab>
              <Knobs>
                <Row><Knob name="PAN" angle={0} /><Knob name="VEL" angle={80} /><Knob name="REL" angle={0} /></Row>
                <Row><Knob name="MODX" angle={0} /><Knob name="MODY" angle={0} /></Row>
                <Knob name="PITCH" angle={0} />
              </Knobs>
              <Switches>
                <CheckLabel><Check type="checkbox" />Slide</CheckLabel>
                <CheckLabel><Check type="checkbox" />Porta</CheckLabel>
                <Swatch aria-label="Note colour" />
              </Switches>
            </Group>
            <Group $h={65}>
              <Tab $w={38}>Time</Tab>
              <TimeRow>Start time<TimeInput defaultValue="3:01:000" /></TimeRow>
              <TimeRow>Duration<TimeInput defaultValue="2:00:000" /></TimeRow>
            </Group>
            <Accept>Accept</Accept>
          </DialogBody>
        </DialogInner>
      </Dialog>
      <Pointer>
        <svg width="18" height="20" viewBox="0 0 18 20" aria-hidden="true">
          <path d="M2 1l3 0 4 6 2-1 3 1 2 3 0 4-3 5-5-2-5-5 1-2 3 1z" fill="#fff" stroke="#5a6570" strokeWidth="0.800" />
        </svg>
      </Pointer>
    </Shell>
  );
}
